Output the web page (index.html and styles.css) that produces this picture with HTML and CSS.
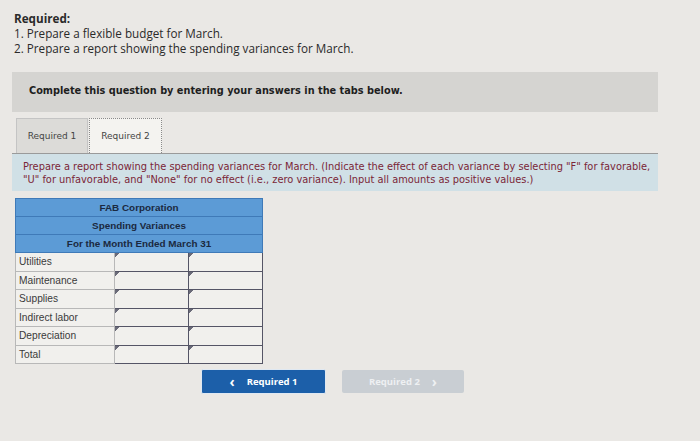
FILE: index.html
```html
<html>
	<head>
		<title>Spending Variances</title>
		<link rel="stylesheet" href="styles.css">
	</head>
	<body>
		<div class="required">
			<b>Required:</b><br />
			1. Prepare a flexible budget for March.<br />
			2. Prepare a report showing the spending variances for March.
		</div>

		<div class="notice">Complete this question by entering your answers in the tabs below.</div>

		<div class="tabs">
			<div class="tab">Required 1</div>
			<div class="tab active">Required 2</div>
		</div>

		<div class="panel">
			<div class="instr">Prepare a report showing the spending variances for March. (Indicate the effect of each variance by selecting "F" for favorable,<br />
				"U" for unfavorable, and "None" for no effect (i.e., zero variance). Input all amounts as positive values.)</div>

			<table class="report">
				<tr><th colspan="3">FAB Corporation</th></tr>
				<tr><th colspan="3">Spending Variances</th></tr>
				<tr><th colspan="3">For the Month Ended March 31</th></tr>
				<tr><td class="label">Utilities</td><td class="cell"></td><td class="cell"></td></tr>
				<tr><td class="label">Maintenance</td><td class="cell"></td><td class="cell"></td></tr>
				<tr><td class="label">Supplies</td><td class="cell"></td><td class="cell"></td></tr>
				<tr><td class="label">Indirect labor</td><td class="cell"></td><td class="cell"></td></tr>
				<tr><td class="label">Depreciation</td><td class="cell"></td><td class="cell"></td></tr>
				<tr><td class="label">Total</td><td class="cell"></td><td class="cell"></td></tr>
			</table>
		</div>

		<div class="nav">
			<div class="btn prev"><span class="arr">&lsaquo;</span> Required 1</div>
			<div class="btn next">Required 2 <span class="arr">&rsaquo;</span></div>
		</div>
	</body>
</html>
```

FILE: styles.css
```css
body
{
	margin: 0;
	padding: 10px 12px;
	background: #eae8e5;
	color: #2a2a2a;
	font-family: "Open Sans", "Liberation Sans", sans-serif;
}

.required
{
	font-size: 11.7px;
	line-height: 15px;
	padding: 1px 0 0 2px;
}

.notice
{
	margin-top: 16px;
	width: 646px;
	height: 40px;
	box-sizing: border-box;
	padding: 10px 17px;
	background: #d5d4d1;
	font-family: "DejaVu Sans", sans-serif;
	font-size: 9.75px;
	font-weight: bold;
	line-height: 17px;
	color: #1e1e1e;
}

.tabs
{
	display: flex;
	gap: 1px;
	margin-top: 6px;
	padding-left: 4px;
	width: 642px;
	border-bottom: 1px solid #9a9a9a;
}
.tab
{
	width: 72px;
	height: 35px;
	box-sizing: border-box;
	border: 1px solid #c4c4c4;
	border-bottom: none;
	background: #dcdbd8;
	font-family: "DejaVu Sans", sans-serif;
	font-size: 9px;
	color: #444444;
	display: flex;
	align-items: center;
	justify-content: center;
}
.tab.active
{
	width: 73px;
	background: #f4f3f0;
	border: 1px dotted #8a8a8a;
	border-bottom: none;
}

.panel
{
	width: 646px;
}

.instr
{
	background: #d0e0e6;
	padding: 6px 10px 5px 11px;
	font-family: "DejaVu Sans", sans-serif;
	font-size: 9.85px;
	line-height: 13px;
	color: #7b2637;
	white-space: nowrap;
}

.report
{
	margin: 7px 0 0 3px;
	border-collapse: collapse;
	font-family: "Liberation Sans", Arial, sans-serif;
	font-size: 10.2px;
	background: #f1f0ed;
}
.report th
{
	background: #5c9bd6;
	color: #1b2940;
	height: 18px;
	padding: 0;
	border: 1px solid #3f7ab8;
	font-weight: bold;
	font-size: 9.9px;
}
.report td
{
	height: 18.5px;
	padding: 0;
}
.label
{
	width: 95px;
	padding-left: 3px !important;
	border: 1px solid #b8b8b8;
	color: #3a3a3a;
}
.cell
{
	width: 73px;
	border: 1.5px solid #555566;
	background: #f1f0ed linear-gradient(135deg, #6a6a78 3px, transparent 3px) no-repeat;
}

.nav
{
	display: flex;
	gap: 16px;
	margin: 5px 0 0 189px;
	align-items: flex-start;
}
.btn
{
	width: 125px;
	height: 25px;
	box-sizing: border-box;
	display: flex;
	align-items: center;
	justify-content: center;
	gap: 12px;
	font-family: "Open Sans", "Liberation Sans", sans-serif;
	font-size: 9.5px;
	font-weight: bold;
	border-radius: 2px;
}
.btn .arr
{
	font-size: 14px;
	font-weight: bold;
	line-height: 10px;
}
.prev
{
	background: #1c5fa9;
	color: #ffffff;
	border: 1px solid #dfe8f2;
}
.next
{
	width: 122px;
	height: 23px;
	margin-top: 1px;
	background: #c9ced3;
	color: #eef0f2;
}
```
